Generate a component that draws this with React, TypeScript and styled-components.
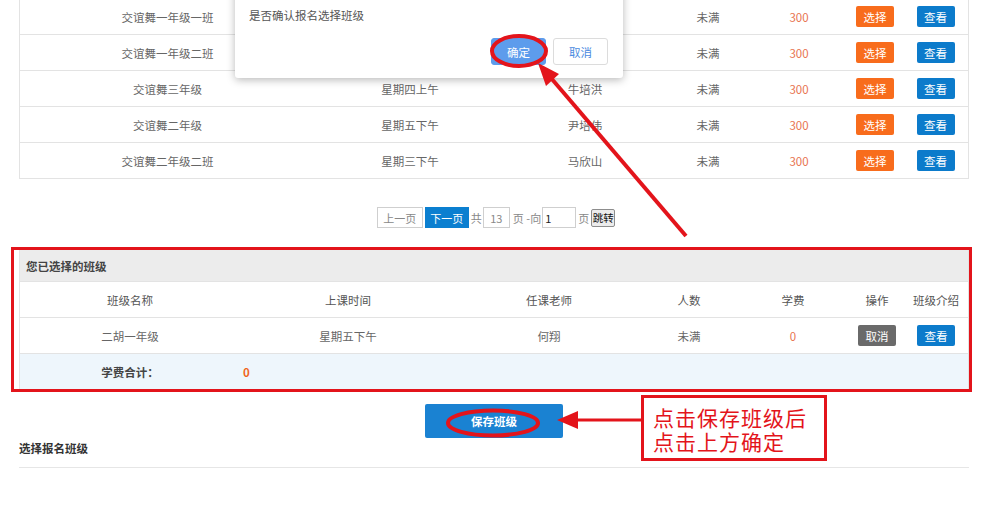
import React from 'react';
import styled, { createGlobalStyle } from 'styled-components';

const GlobalStyle = createGlobalStyle`
  html, body { margin: 0; padding: 0; background: #fff; }
  body { font-family: "Noto Sans CJK SC", "Microsoft YaHei", sans-serif; }
  * { box-sizing: border-box; }
`;

const Page = styled.div`
  position: relative;
  width: 989px;
  height: 524px;
  overflow: hidden;
  background: #fff;
`;

const Content = styled.div`
  width: 950px;
  margin: -2px 0 0 19px;
  font-size: 11.5px;
  color: #666;
`;

const TableBox = styled.div`
  border: 1px solid #e3e3e3;
  border-bottom: 0;
  background: #fff;
`;

const Row = styled.div<{ $cols: string; $bg?: string }>`
  display: grid;
  grid-template-columns: ${(p) => p.$cols};
  height: 36px;
  border-bottom: 1px solid #e3e3e3;
  background: ${(p) => p.$bg || '#fff'};
`;

const Cell = styled.div<{ $color?: string; $bold?: boolean; $align?: string; $pad?: number }>`
  display: flex;
  align-items: center;
  justify-content: ${(p) => p.$align || 'center'};
  padding-left: ${(p) => p.$pad || 0}px;
  color: ${(p) => p.$color || '#666'};
  font-weight: ${(p) => (p.$bold ? 700 : 400)};
  white-space: nowrap;
`;

const SmallBtn = styled.span<{ $bg: string }>`
  display: inline-flex;
  align-items: center;
  justify-content: center;
  width: 38px;
  height: 21px;
  border-radius: 2px;
  background: ${(p) => p.$bg};
  color: #fff;
  font-size: 11.5px;
`;

const Pager = styled.div`
  display: flex;
  justify-content: center;
  align-items: center;
  margin-top: 28px;
  padding-left: 4px;
  height: 21px;
  color: #888;
  font-size: 11px;
`;

const PageBox = styled.span<{ $active?: boolean; $w: number; $mr?: number }>`
  display: inline-flex;
  align-items: center;
  justify-content: center;
  width: ${(p) => p.$w}px;
  height: 21px;
  border: 1px solid ${(p) => (p.$active ? '#0b7fd0' : '#cfcfcf')};
  background: ${(p) => (p.$active ? '#0b7fd0' : '#fff')};
  color: ${(p) => (p.$active ? '#fff' : '#888')};
  margin-right: ${(p) => p.$mr ?? 2}px;
`;

const PageInput = styled.span`
  display: inline-flex;
  align-items: center;
  width: 34px;
  height: 21px;
  border: 1px solid #cfcfcf;
  padding-left: 2px;
  color: #222;
  margin: 0 2px 0 0;
`;

const PageText = styled.span`
  margin-right: 1px;
`;

const JumpBtn = styled.span`
  display: inline-flex;
  align-items: center;
  justify-content: center;
  width: 24px;
  height: 18px;
  margin-left: 2px;
  border: 1px solid #8d8d8d;
  border-radius: 2px;
  background: #ececec;
  color: #111;
  font-size: 10.5px;
`;

const Panel = styled.div`
  margin-top: 21px;
  border: 1px solid #e3e3e3;
  border-bottom: 0;
`;

const PanelTitle = styled.div`
  height: 32px;
  display: flex;
  align-items: center;
  padding-left: 6px;
  background: #ececec;
  border-bottom: 1px solid #e3e3e3;
  color: #444;
  font-weight: 700;
`;

const SaveBtn = styled.div`
  width: 138px;
  height: 34px;
  margin: 14px auto 0;
  display: flex;
  align-items: center;
  justify-content: center;
  background: #1a82d2;
  border-radius: 2px;
  color: #fff;
  font-weight: 700;
  font-size: 11.5px;
`;

const Heading = styled.div`
  padding: 2px 0 11px;
  line-height: 16px;
  border-bottom: 1px solid #e6e6e6;
  color: #333;
  font-weight: 700;
`;

const Dialog = styled.div`
  position: absolute;
  left: 235px;
  top: -20px;
  width: 388px;
  padding: 27px 15px 13px 14px;
  background: #fff;
  border-radius: 3px;
  box-shadow: 0 2px 8px rgba(0, 0, 0, 0.28);
  font-size: 11.5px;
  color: #555;
`;

const DialogText = styled.div`
  line-height: 16px;
`;

const DialogActions = styled.div`
  display: flex;
  justify-content: flex-end;
  gap: 7px;
  margin-top: 15px;
`;

const DialogBtn = styled.span<{ $primary?: boolean }>`
  display: inline-flex;
  align-items: center;
  justify-content: center;
  width: 55px;
  height: 27px;
  border-radius: 3px;
  border: 1px solid ${(p) => (p.$primary ? '#5d9cec' : '#dcdcdc')};
  background: ${(p) => (p.$primary ? '#5d9cec' : '#fff')};
  color: ${(p) => (p.$primary ? '#fff' : '#4a8ae0')};
  font-size: 11.5px;
`;

const Overlay = styled.svg`
  position: absolute;
  left: 0;
  top: 0;
  pointer-events: none;
`;

const Note = styled.div`
  position: absolute;
  left: 641px;
  top: 395px;
  width: 186px;
  height: 66px;
  padding: 7px 0 0 9px;
  border: 3px solid #e3141b;
  background: #fff;
  color: #e3141b;
  font-size: 21px;
  letter-spacing: 1px;
  font-family: "Noto Sans CJK SC", sans-serif;
`;

const NoteLine = styled.div`
  height: 24px;
  line-height: 24px;
  overflow: visible;
`;

const topCols = '295px 190px 160px 86px 96px 56px 65px';
const selCols = '220px 216px 186px 94px 114px 54px 64px';

const courses = [
  { name: '交谊舞一年级一班', time: '', teacher: '' },
  { name: '交谊舞一年级二班', time: '', teacher: '' },
  { name: '交谊舞三年级', time: '星期四上午', teacher: '牛培洪' },
  { name: '交谊舞二年级', time: '星期五下午', teacher: '尹培伟' },
  { name: '交谊舞二年级二班', time: '星期三下午', teacher: '马欣山' },
];

export default function App() {
  return (
    <Page>
      <GlobalStyle />
      <Content>
        <TableBox>
          {courses.map((c) => (
            <Row $cols={topCols} key={c.name}>
              <Cell>{c.name}</Cell>
              <Cell>{c.time}</Cell>
              <Cell>{c.teacher}</Cell>
              <Cell>未满</Cell>
              <Cell $color="#e8734f">300</Cell>
              <Cell><SmallBtn $bg="#f86c1c">选择</SmallBtn></Cell>
              <Cell><SmallBtn $bg="#0c7bcb">查看</SmallBtn></Cell>
            </Row>
          ))}
        </TableBox>

        <Pager>
          <PageBox $w={46}>上一页</PageBox>
          <PageBox $w={44} $active>下一页</PageBox>
          <PageText>共</PageText>
          <PageBox $w={27} $mr={3}>13</PageBox>
          <PageText>页 -向</PageText>
          <PageInput>1</PageInput>
          <span>页</span>
          <JumpBtn>跳转</JumpBtn>
        </Pager>

        <Panel>
          <PanelTitle>您已选择的班级</PanelTitle>
          <Row $cols={selCols}>
            <Cell $color="#555">班级名称</Cell>
            <Cell $color="#555">上课时间</Cell>
            <Cell $color="#555">任课老师</Cell>
            <Cell $color="#555">人数</Cell>
            <Cell $color="#555">学费</Cell>
            <Cell $color="#555">操作</Cell>
            <Cell $color="#555">班级介绍</Cell>
          </Row>
          <Row $cols={selCols}>
            <Cell>二胡一年级</Cell>
            <Cell>星期五下午</Cell>
            <Cell>何翔</Cell>
            <Cell>未满</Cell>
            <Cell $color="#e8734f">0</Cell>
            <Cell><SmallBtn $bg="#6a6a6a">取消</SmallBtn></Cell>
            <Cell><SmallBtn $bg="#0c7bcb">查看</SmallBtn></Cell>
          </Row>
          <Row $cols={selCols} $bg="#eef6fc">
            <Cell $color="#444" $bold>学费合计：</Cell>
            <Cell $color="#f0661e" $bold $align="flex-start" $pad={3}>0</Cell>
          </Row>
        </Panel>

        <SaveBtn>保存班级</SaveBtn>
        <Heading>选择报名班级</Heading>
      </Content>

      <Dialog>
        <DialogText>是否确认报名选择班级</DialogText>
        <DialogActions>
          <DialogBtn $primary>确定</DialogBtn>
          <DialogBtn>取消</DialogBtn>
        </DialogActions>
      </Dialog>

      <Note>
        <NoteLine>点击保存班级后</NoteLine>
        <NoteLine>点击上方确定</NoteLine>
      </Note>

      <Overlay width="989" height="524" viewBox="0 0 989 524">
        <ellipse cx="519" cy="51" rx="27" ry="15" fill="none" stroke="#e3141b" strokeWidth="4" />
        <line x1="686" y1="236" x2="551" y2="78" stroke="#e3141b" strokeWidth="4" />
        <polygon points="538,63 559,74 546,86" fill="#e3141b" />
        <rect x="12.5" y="248.5" width="958" height="142" fill="none" stroke="#e3141b" strokeWidth="3" />
        <ellipse cx="493" cy="423" rx="45" ry="12.5" fill="none" stroke="#e3141b" strokeWidth="4" />
        <line x1="641" y1="420" x2="575" y2="420" stroke="#e3141b" strokeWidth="3" />
        <polygon points="557,420 578,411 578,429" fill="#e3141b" />
      </Overlay>
    </Page>
  );
}
